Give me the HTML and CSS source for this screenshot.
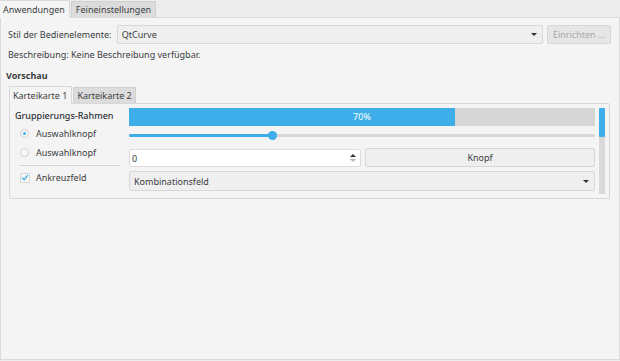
FILE: index.html
```html
<!DOCTYPE html>
<html lang="de">
<head>
    <meta charset="UTF-8">
    <title>Anwendungsstil</title>
    <link rel="stylesheet" href="styles.css">
</head>
<body>
    <div class="tabbar">
        <div class="tab active">Anwendungen</div>
        <div class="tab">Feineinstellungen</div>
    </div>

    <div class="page">
        <div class="style-row">
            <span class="label">Stil der Bedienelemente:</span>
            <div class="combo style-combo">
                <span>QtCurve</span>
                <span class="arrow"></span>
            </div>
            <button class="btn disabled">Einrichten ...</button>
        </div>
        <div class="desc">Beschreibung: Keine Beschreibung verfügbar.</div>

        <div class="section-title">Vorschau</div>

        <div class="inner-tabbar">
            <div class="itab active">Karteikarte 1</div>
            <div class="itab">Karteikarte 2</div>
        </div>
        <div class="preview">
            <div class="left-col">
                <div class="group-title">Gruppierungs-Rahmen</div>
                <div class="radio-row">
                    <span class="radio checked"></span>
                    <span>Auswahlknopf</span>
                </div>
                <div class="radio-row">
                    <span class="radio"></span>
                    <span>Auswahlknopf</span>
                </div>
                <div class="separator"></div>
                <div class="check-row">
                    <span class="checkbox">
                        <svg width="9" height="9" viewBox="0 0 9 9"><path d="M1.5 4.8 L3.6 7 L7.6 1.8" fill="none" stroke="#3daee9" stroke-width="1.4"/></svg>
                    </span>
                    <span>Ankreuzfeld</span>
                </div>
            </div>

            <div class="right-col">
                <div class="progress">
                    <div class="progress-fill" style="width: 70%;"></div>
                    <span class="progress-text">70%</span>
                </div>
                <div class="slider">
                    <div class="slider-fill" style="width: 30.8%;"></div>
                    <span class="slider-handle"></span>
                </div>
                <div class="spin-row">
                    <div class="spinbox">
                        <span>0</span>
                        <span class="spin-arrows">
                            <span class="up"></span>
                            <span class="down"></span>
                        </span>
                    </div>
                    <button class="btn knopf">Knopf</button>
                </div>
                <div class="combo wide-combo">
                    <span>Kombinationsfeld</span>
                    <span class="arrow"></span>
                </div>
            </div>

            <div class="scrollbar">
                <div class="scroll-handle"></div>
            </div>
        </div>
    </div>
</body>
</html>
```

FILE: styles.css
```css
body {
    margin: 0;
    font-family: "Noto Sans", "DejaVu Sans", sans-serif;
    font-size: 9px;
    color: #3b3e42;
    background-color: #ececec;
    width: 620px;
    height: 361px;
    overflow: hidden;
    white-space: nowrap;
}

.tabbar {
    display: flex;
    height: 17px;
    align-items: flex-end;
}

.tab {
    height: 15px;
    line-height: 15px;
    padding: 0 4px;
    background-color: #dcdcdc;
    border: 1px solid #d0d0d0;
    border-bottom: none;
    margin-left: 1px;
}

.tab.active {
    height: 17px;
    line-height: 17px;
    margin-left: 0;
    padding: 0 4px 0 3px;
    background-color: #f4f4f4;
    border-color: #dadada;
    border-left: none;
    position: relative;
    top: 1px;
}

.page {
    height: 343px;
    background-color: #f4f4f4;
    border: 1px solid #dadada;
    box-sizing: border-box;
    padding: 7px 8px 0 7px;
}

.style-row {
    display: flex;
    align-items: center;
    height: 19px;
}

.label {
    width: 109px;
}

.combo {
    display: flex;
    align-items: center;
    justify-content: space-between;
    height: 19px;
    box-sizing: border-box;
    padding: 0 5px 0 4px;
    background-color: #efeff0;
    border: 1px solid #d8d8d8;
    border-radius: 2px;
}

.style-combo {
    width: 427px;
}

.arrow {
    width: 0;
    height: 0;
    border-left: 3px solid transparent;
    border-right: 3px solid transparent;
    border-top: 3px solid #333;
}

.btn {
    font-family: inherit;
    font-size: 9px;
    color: #3b3e42;
    background-color: #efeff0;
    border: 1px solid #d6d6d6;
    border-radius: 2px;
    height: 19px;
    padding: 0;
}

.btn.disabled {
    color: #a9a9a9;
    background-color: #e6e6e6;
    width: 64px;
    margin-left: 4px;
}

.desc {
    margin-top: 2px;
    height: 18px;
    line-height: 18px;
}

.section-title {
    font-weight: bold;
    margin: 3px 0 0 -2px;
    height: 18px;
    line-height: 18px;
}

.inner-tabbar {
    display: flex;
    align-items: flex-end;
    height: 17px;
    margin-top: 1px;
    padding-left: 1px;
}

.itab {
    height: 15px;
    line-height: 15px;
    padding: 0 3px;
    background-color: #dcdcdc;
    border: 1px solid #d0d0d0;
    border-bottom: none;
    margin-left: 1px;
}

.itab.active {
    height: 17px;
    line-height: 17px;
    margin-left: 0;
    padding: 0 4px 0 3px;
    background-color: #f4f4f4;
    border-color: #d8d8d8;
    position: relative;
    top: 1px;
}

.preview {
    display: flex;
    margin-left: 1px;
    width: 601px;
    height: 96px;
    box-sizing: border-box;
    border: 1px solid #d8d8d8;
    border-radius: 0 2px 2px 2px;
    padding: 4px 4px 0 5px;
}

.left-col {
    width: 109px;
    margin-right: 5px;
}

.group-title {
    font-weight: 500;
    color: #2f3236;
    height: 16px;
    line-height: 16px;
}

.radio-row,
.check-row {
    display: flex;
    align-items: center;
    height: 19px;
    padding-left: 5px;
}

.radio {
    width: 9px;
    height: 9px;
    box-sizing: border-box;
    border: 1px solid #d2d2d2;
    border-radius: 50%;
    background-color: #f7f7f7;
    margin-right: 7px;
    position: relative;
}

.radio.checked::after {
    content: "";
    position: absolute;
    left: 2px;
    top: 2px;
    width: 3px;
    height: 3px;
    border-radius: 50%;
    background-color: #3daee9;
}

.separator {
    height: 1px;
    background-color: #d6d6d6;
    margin: 3px 0 3px 4px;
    width: 102px;
}

.check-row {
    height: 17px;
}

.checkbox {
    width: 10px;
    height: 10px;
    box-sizing: border-box;
    border: 1px solid #d6d6d6;
    background-color: #f7f7f7;
    border-radius: 1px;
    margin-right: 6px;
    display: flex;
    align-items: center;
    justify-content: center;
}

.right-col {
    flex: 1;
    display: flex;
    flex-direction: column;
}

.progress {
    position: relative;
    height: 18px;
    background-color: #d6d6d6;
}

.progress-fill {
    height: 100%;
    background-color: #3daee9;
}

.progress-text {
    position: absolute;
    left: 0;
    right: 0;
    top: 0;
    line-height: 18px;
    text-align: center;
    color: #ffffff;
}

.slider {
    position: relative;
    height: 3px;
    margin-top: 8px;
    background-color: #d6d6d6;
    border-radius: 2px;
}

.slider-fill {
    height: 100%;
    background-color: #3daee9;
    border-radius: 2px;
}

.slider-handle {
    position: absolute;
    left: 139px;
    top: -3px;
    width: 9px;
    height: 9px;
    border-radius: 50%;
    background-color: #3daee9;
}

.spin-row {
    display: flex;
    gap: 4px;
    margin-top: 11px;
    height: 19px;
}

.spinbox {
    width: 232px;
    height: 18px;
    margin-top: 1px;
    box-sizing: border-box;
    background-color: #ffffff;
    border: 1px solid #dcdcdc;
    border-radius: 2px;
    display: flex;
    align-items: center;
    justify-content: space-between;
    padding: 0 4px 0 2px;
}

.spin-arrows {
    display: flex;
    flex-direction: column;
    gap: 2px;
}

.spin-arrows .up {
    border-left: 3px solid transparent;
    border-right: 3px solid transparent;
    border-bottom: 3px solid #333;
}

.spin-arrows .down {
    border-left: 3px solid transparent;
    border-right: 3px solid transparent;
    border-top: 3px solid #b8b8b8;
}

.btn.knopf {
    flex: 1;
    height: 19px;
}

.wide-combo {
    margin-top: 4px;
    height: 20px;
}

.scrollbar {
    width: 6px;
    height: 86px;
    margin: 0 0 0 4px;
    background-color: #d9d9d9;
    border-radius: 1px;
}

.scroll-handle {
    height: 29px;
    background-color: #3daee9;
    border-radius: 1px;
}
```
